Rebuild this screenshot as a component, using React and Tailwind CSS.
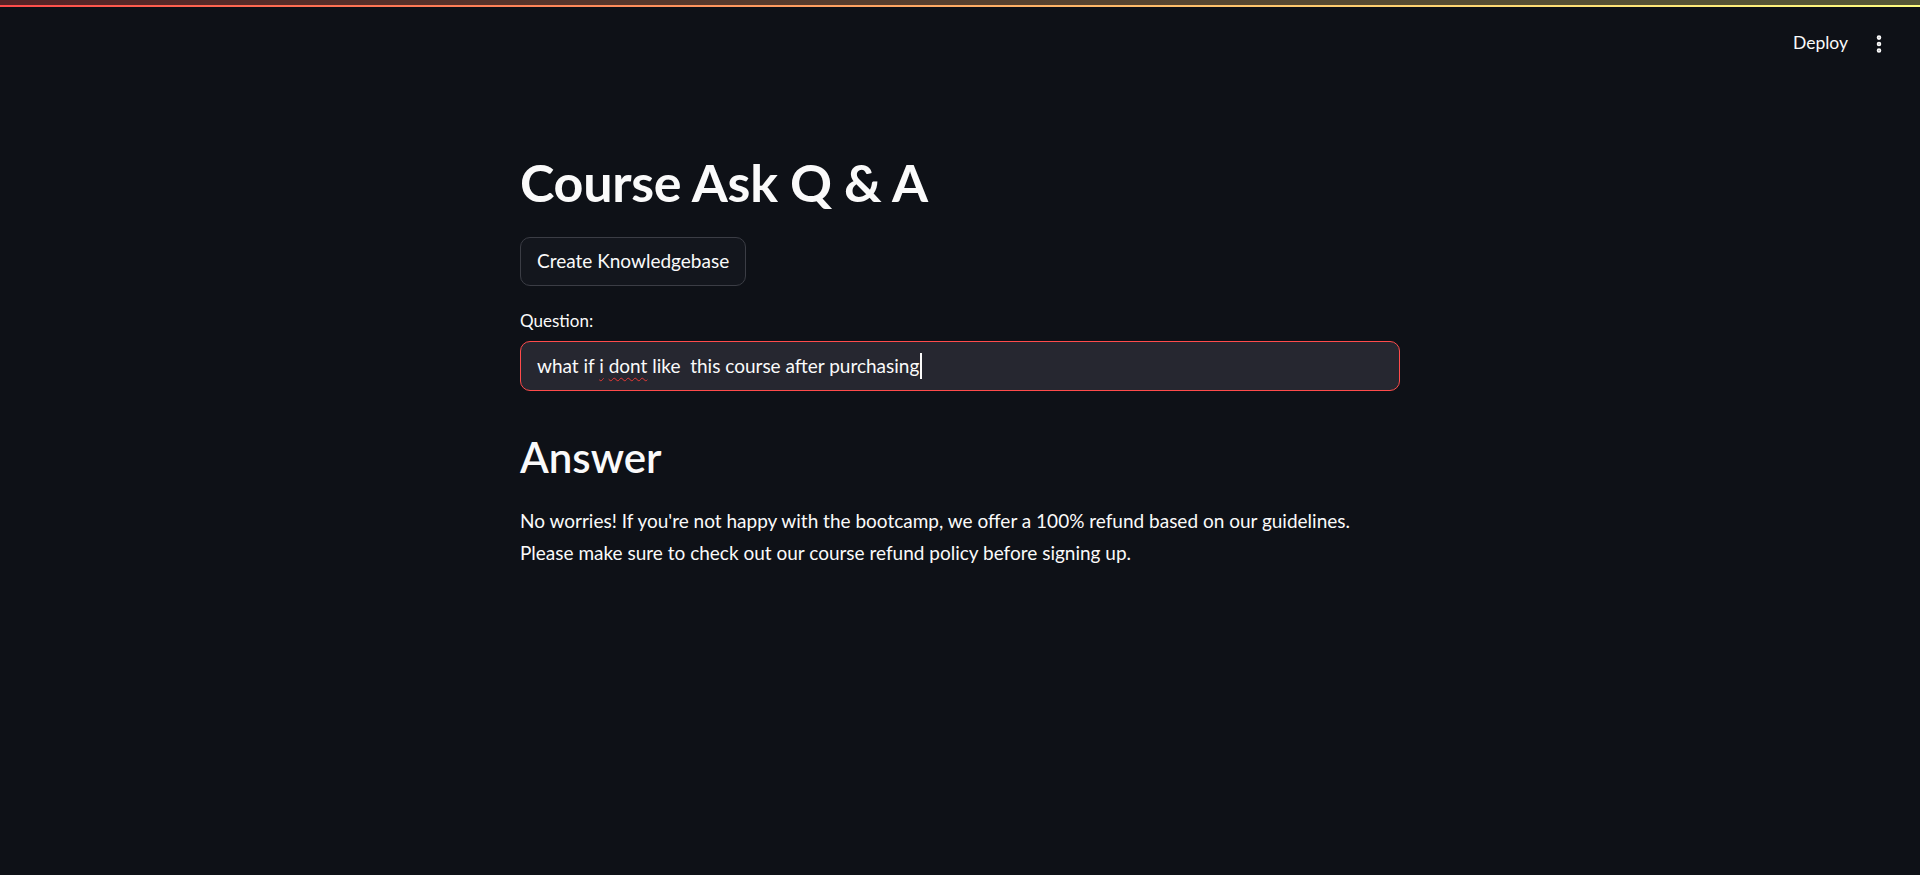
import { EllipsisVertical } from 'lucide-react'

const font = { fontFamily: 'Lato, "Noto Sans", sans-serif' }

function Header() {
  return (
    <header className="flex h-[73px] items-center justify-end gap-[20px] pr-[30px]">
      <button className="text-[17.5px] text-[#fafafa]">Deploy</button>
      <EllipsisVertical size={22} strokeWidth={3} className="text-[#fafafa]" />
    </header>
  )
}

export default function App() {
  return (
    <div className="min-h-[875px] bg-[#0e1117] text-[#fafafa]" style={font}>
      <div className="h-[7px] bg-gradient-to-r from-[#ff4b4b] to-[#fffd80]">
        <div className="h-[5px] bg-[#0e1117]/70" />
      </div>
      <Header />

      <main className="mx-auto w-[880px] pt-[69px]">
        <h1 className="text-[52px] font-bold leading-[66px] tracking-[-0.3px]">Course Ask Q &amp; A</h1>

        <button className="mt-[22px] h-[49px] rounded-[10px] border border-[#3b3d45] bg-[#13161d] px-[16px] text-[19px]">
          Create Knowledgebase
        </button>

        <label className="mt-[24px] block text-[17px] leading-[22px]">Question:</label>
        <div className="mt-[9px] flex h-[50px] items-center rounded-[10px] border border-[#ff4b4b] bg-[#262730] px-[16px] text-[19px] whitespace-pre">
          <span>what if </span>
          <span className="underline decoration-wavy decoration-[#e53935] decoration-1 underline-offset-4">i</span>
          <span> </span>
          <span className="underline decoration-wavy decoration-[#e53935] decoration-1 underline-offset-4">dont</span>
          <span> like  this course after purchasing</span>
          <span className="ml-px inline-block h-[26px] w-[2px] bg-[#fafafa]" />
        </div>

        <h2 className="mt-[39px] text-[42px] font-semibold leading-[54px]">Answer</h2>
        <p className="mt-[21px] text-[19px] leading-[32px]">
          No worries! If you're not happy with the bootcamp, we offer a 100% refund based on our guidelines.
          <br />
          Please make sure to check out our course refund policy before signing up.
        </p>
      </main>
    </div>
  )
}
